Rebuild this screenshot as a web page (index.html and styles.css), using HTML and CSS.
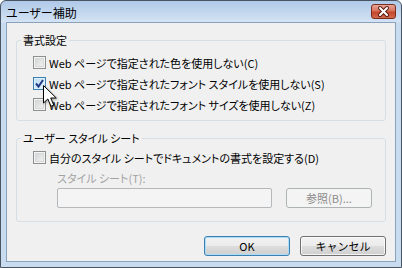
FILE: index.html
```html
<!DOCTYPE html>
<html lang="ja">
<head>
  <meta charset="UTF-8">
  <title>ユーザー補助</title>
  <link rel="stylesheet" href="styles.css">
</head>
<body>

  <div class="window">
    <div class="titlebar">
      <span class="title">ユーザー補助</span>
      <span class="close">
        <svg width="23" height="13" viewBox="0 0 23 13">
          <path d="M8 3 L15 10 M15 3 L8 10" stroke="#5b1d12" stroke-width="4" stroke-linecap="round"/>
          <path d="M8 3 L15 10 M15 3 L8 10" stroke="#fff" stroke-width="2" stroke-linecap="round"/>
        </svg>
      </span>
    </div>

    <div class="client">
      <fieldset class="group">
        <legend>書式設定</legend>
        <div class="rows rows-format">
          <label class="check"><span class="box"></span>Web ページで指定された色を使用しない(C)</label>
          <label class="check"><span class="box box-hot">
            <svg width="11" height="11" viewBox="0 0 11 11"><path d="M2 5.5 L4.5 8.5 L9 2" fill="none" stroke="#203c86" stroke-width="2"/></svg>
          </span>Web ページで指定されたフォント スタイルを使用しない(S)</label>
          <label class="check"><span class="box"></span>Web ページで指定されたフォント サイズを使用しない(Z)</label>
        </div>
      </fieldset>

      <fieldset class="group group-user">
        <legend>ユーザー スタイル シート</legend>
        <div class="rows rows-user">
          <label class="check"><span class="box"></span>自分のスタイル シートでドキュメントの書式を設定する(D)</label>
          <div class="sub">
            <div class="sub-label">スタイル シート(T):</div>
            <div class="sub-row">
              <span class="textbox"></span>
              <button class="btn btn-disabled">参照(B)...</button>
            </div>
          </div>
        </div>
      </fieldset>

      <div class="actions">
        <button class="btn btn-default">OK</button>
        <button class="btn">キャンセル</button>
      </div>
    </div>

    <svg class="cursor" width="15" height="24" viewBox="0 0 15 24">
      <path d="M0.5 0.5 L0.5 18 L4.8 14 L8 21.3 L10.8 20.1 L7.7 13 L13.3 13 Z" fill="#fff" stroke="#000" stroke-width="1" stroke-linejoin="round"/>
    </svg>
  </div>

</body>
</html>
```

FILE: styles.css
```css
body {
  margin: 0;
  font-family: "Noto Sans CJK JP", "Noto Sans", sans-serif;
  font-size: 11px;
  font-feature-settings: "palt";
  color: #000;
}

.window {
  position: relative;
  width: 402px;
  height: 268px;
  box-sizing: border-box;
  border: 1px solid #4a5563;
  border-radius: 6px 6px 0 0;
  padding: 0 5px 5px;
  background: linear-gradient(#afc9e8, #d4e3f4 21px, #c9dbef 22px, #c9dbef);
  display: flex;
  flex-direction: column;
}

.titlebar {
  height: 21px;
  display: flex;
  justify-content: space-between;
  align-items: flex-start;
}

.title {
  padding-top: 4px;
  line-height: 16px;
  font-size: 12px;
}

.close {
  margin-top: 3px;
  width: 25px;
  height: 15px;
  box-sizing: border-box;
  border: 1px solid #7a2b1d;
  border-radius: 3px;
  background: linear-gradient(#e9a899, #d8735e 45%, #c5452c 55%, #d26a4f);
  display: flex;
}

.client {
  flex: 1;
  border: 1px solid #8ba2bd;
  background: #f0f0f0;
  padding: 0 9px;
}

.group {
  margin: 9px 0 0;
  padding: 0;
  border: 1px solid #d5dfe5;
  border-radius: 3px;
  min-width: 0;
}

.group legend {
  margin-left: 4px;
  padding: 0 2px;
  line-height: 16px;
}

.rows {
  padding-left: 16px;
}

.rows-format {
  padding-top: 4px;
  padding-bottom: 5px;
}

.rows-user {
  padding-top: 1px;
  padding-bottom: 13px;
}

.check {
  height: 21px;
  display: flex;
  align-items: center;
}

.box {
  width: 13px;
  height: 13px;
  box-sizing: border-box;
  margin-right: 3px;
  border: 1px solid #8e8f8f;
  background: linear-gradient(135deg, #cdd0d3, #f6f6f6);
  box-shadow: inset 0 0 0 1px #f4f4f4, inset 0 0 0 2px #d8d8d8;
  display: flex;
  align-items: center;
  justify-content: center;
}

.box-hot {
  border-color: #3c7fb1;
  background: linear-gradient(135deg, #b9dbf3, #eaf6fd);
  box-shadow: inset 0 0 0 1px #def0fb;
}

.sub {
  padding-left: 24px;
}

.sub-label {
  margin-top: 2px;
  line-height: 16px;
  color: #a3a3a3;
}

.sub-row {
  margin-top: 2px;
  display: flex;
  gap: 14px;
}

.textbox {
  width: 215px;
  height: 20px;
  box-sizing: border-box;
  border: 1px solid #b5b8bb;
  border-radius: 2px;
  background: #f4f4f4;
}

.btn {
  width: 86px;
  height: 20px;
  padding: 0;
  box-sizing: border-box;
  font-family: inherit;
  font-size: 11px;
  color: #000;
  border: 1px solid #707070;
  border-radius: 3px;
  background: linear-gradient(#f2f2f2, #ebebeb 50%, #dddddd 50%, #cfcfcf);
  box-shadow: inset 0 0 0 1px rgba(255, 255, 255, 0.75);
}

.btn-default {
  border-color: #3c7fb1;
  box-shadow: inset 0 0 0 1px #a9def8;
}

.btn-disabled {
  color: #8b8b8b;
  border-color: #adb2b5;
  background: #f4f4f4;
  box-shadow: none;
}

.actions {
  margin-top: 14px;
  display: flex;
  justify-content: flex-end;
  gap: 10px;
}

.cursor {
  position: absolute;
  left: 42px;
  top: 84px;
  filter: drop-shadow(1px 1px 1px rgba(0, 0, 0, 0.3));
}
```
